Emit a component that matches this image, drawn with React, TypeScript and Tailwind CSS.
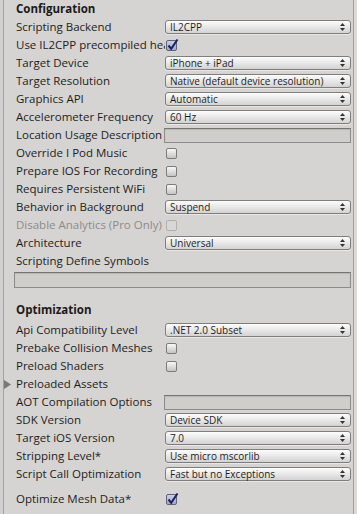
import React from "react";

const Arrows = () => (
    <svg className="absolute right-[5px] top-1/2 -translate-y-1/2" width="5" height="8" viewBox="0 0 5 8">
        <path d="M2.5 0 L5 3 L0 3 Z" fill="#333" />
        <path d="M0 5 L5 5 L2.5 8 Z" fill="#333" />
    </svg>
);

const Dropdown = ({ value }: { value: string }) => (
    <div className="relative flex h-[14px] items-center rounded-[3px] border border-[#807e7c] bg-linear-to-b from-[#fdfdfd] to-[#d3d3d3] pl-[4px] text-[10px] leading-none text-[#1e1e1e] shadow-[0_1px_0_rgba(255,255,255,0.45)]">
        {value}
        <Arrows />
    </div>
);

const Checkbox = ({ checked, disabled }: { checked?: boolean; disabled?: boolean }) => {
    if (disabled) {
        return <div className="ml-[1px] h-[11px] w-[11px] rounded-[2px] border border-[#b2b0ae] bg-[#d9d7d5]" />;
    }
    if (checked) {
        return (
            <div className="relative ml-[1px] h-[11px] w-[11px] rounded-[2px] border border-[#5e6480] bg-linear-to-b from-[#c9cfe8] to-[#9ea7cf]">
                <svg className="absolute -top-[2px] left-0" width="12" height="12" viewBox="0 0 12 12">
                    <path d="M1.5 6.5 L4.2 9.8 L10.5 0.5" fill="none" stroke="#1b2452" strokeWidth="2" />
                </svg>
            </div>
        );
    }
    return <div className="ml-[1px] h-[11px] w-[11px] rounded-[2px] border border-[#7d7b79] bg-linear-to-b from-[#f8f8f8] to-[#c4c4c4]" />;
};

const TextField = ({ tall }: { tall?: boolean }) => (
    <div
        className={
            tall
                ? "h-[16px] border border-[#8e8c8a] border-t-[#767472] bg-[#d0ceca] shadow-[inset_0_1px_1px_rgba(0,0,0,0.12)]"
                : "h-[15px] border border-[#8e8c8a] border-t-[#767472] bg-[#d0ceca] shadow-[inset_0_1px_1px_rgba(0,0,0,0.12)]"
        }
    />
);

const Row = ({
    label,
    disabled,
    arrow,
    children,
}: {
    label: string;
    disabled?: boolean;
    arrow?: boolean;
    children?: React.ReactNode;
}) => (
    <div className="flex h-[18px] items-center">
        {arrow && (
            <span className="-ml-[12px] flex w-[12px] shrink-0 items-center">
                <svg width="7" height="9" viewBox="0 0 7 9">
                    <path d="M0 0 L7 4.5 L0 9 Z" fill="#7a7876" />
                </svg>
            </span>
        )}
        <div
            className={
                disabled
                    ? "w-[149px] shrink-0 overflow-hidden whitespace-nowrap text-[11.5px] text-[#8d8b89]"
                    : "w-[149px] shrink-0 overflow-hidden whitespace-nowrap text-[11.5px] text-[#1d1d1d]"
            }
        >
            {label}
        </div>
        <div className="min-w-0 flex-1">{children}</div>
    </div>
);

const Header = ({ title, className }: { title: string; className: string }) => (
    <div className={className}>
        <span className="text-[11.5px] font-bold text-[#1a1a1a]">{title}</span>
    </div>
);

export default function App() {
    return (
        <div className="flex h-[514px] w-[357px] overflow-hidden bg-[#d6d4d2] font-['Open_Sans',sans-serif]">
            <div className="w-[3px] shrink-0 bg-[#d2d0ce]" />
            <div className="flex min-w-0 flex-1 flex-col border-x border-[#a4a2a0] pl-[12px] pr-[2px]">
                <Header title="Configuration" className="flex h-[18px] items-center" />
                <Row label="Scripting Backend"><Dropdown value="IL2CPP" /></Row>
                <Row label="Use IL2CPP precompiled headers"><Checkbox checked /></Row>
                <Row label="Target Device"><Dropdown value="iPhone + iPad" /></Row>
                <Row label="Target Resolution"><Dropdown value="Native (default device resolution)" /></Row>
                <Row label="Graphics API"><Dropdown value="Automatic" /></Row>
                <Row label="Accelerometer Frequency"><Dropdown value="60 Hz" /></Row>
                <Row label="Location Usage Description"><div className="-ml-[1px]"><TextField /></div></Row>
                <Row label="Override I Pod Music"><Checkbox /></Row>
                <Row label="Prepare IOS For Recording"><Checkbox /></Row>
                <Row label="Requires Persistent WiFi"><Checkbox /></Row>
                <Row label="Behavior in Background"><Dropdown value="Suspend" /></Row>
                <Row label="Disable Analytics (Pro Only)" disabled><Checkbox disabled /></Row>
                <Row label="Architecture"><Dropdown value="Universal" /></Row>
                <Row label="Scripting Define Symbols" />
                <div className="-ml-[2px] mt-[2px]"><TextField tall /></div>

                <Header title="Optimization" className="mt-[12px] flex h-[20px] items-center" />
                <div className="mt-[1px]" />
                <Row label="Api Compatibility Level"><Dropdown value=".NET 2.0 Subset" /></Row>
                <Row label="Prebake Collision Meshes"><Checkbox /></Row>
                <Row label="Preload Shaders"><Checkbox /></Row>
                <Row label="Preloaded Assets" arrow />
                <Row label="AOT Compilation Options"><div className="-ml-[1px]"><TextField /></div></Row>
                <Row label="SDK Version"><Dropdown value="Device SDK" /></Row>
                <Row label="Target iOS Version"><Dropdown value="7.0" /></Row>
                <Row label="Stripping Level*"><Dropdown value="Use micro mscorlib" /></Row>
                <Row label="Script Call Optimization"><Dropdown value="Fast but no Exceptions" /></Row>
                <div className="mt-[7px]" />
                <Row label="Optimize Mesh Data*"><Checkbox checked /></Row>
            </div>
            <div className="w-[3px] shrink-0 bg-[#dcdad8]" />
        </div>
    );
}
